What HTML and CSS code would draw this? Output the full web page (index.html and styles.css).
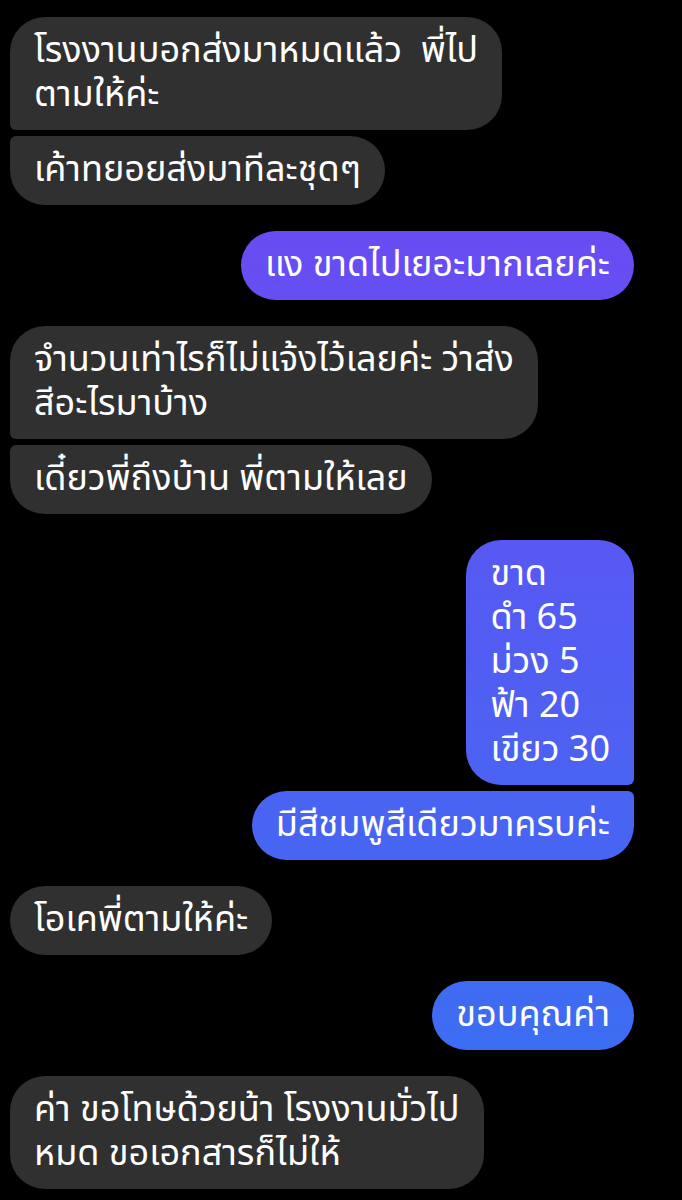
FILE: index.html
```html
<!DOCTYPE html>
<html lang="th">
<head>
  <meta charset="UTF-8">
  <meta name="viewport" content="width=device-width, initial-scale=1.0">
  <link rel="stylesheet" href="styles.css">
  <title>แชท</title>
</head>
<body>
  <div id="chat">
    <div class="group in">
      <div class="msg">โรงงานบอกส่งมาหมดแล้ว&nbsp; พี่ไป<br>ตามให้ค่ะ</div>
      <div class="msg">เค้าทยอยส่งมาทีละชุดๆ</div>
    </div>
    <div class="group out">
      <div class="msg">แง ขาดไปเยอะมากเลยค่ะ</div>
    </div>
    <div class="group in">
      <div class="msg">จำนวนเท่าไรก็ไม่แจ้งไว้เลยค่ะ ว่าส่ง<br>สีอะไรมาบ้าง</div>
      <div class="msg">เดี๋ยวพี่ถึงบ้าน พี่ตามให้เลย</div>
    </div>
    <div class="group out">
      <div class="msg">ขาด<br>ดำ 65<br>ม่วง 5<br>ฟ้า 20<br>เขียว 30</div>
      <div class="msg">มีสีชมพูสีเดียวมาครบค่ะ</div>
    </div>
    <div class="group in">
      <div class="msg">โอเคพี่ตามให้ค่ะ</div>
    </div>
    <div class="group out">
      <div class="msg">ขอบคุณค่า</div>
    </div>
    <div class="group in">
      <div class="msg">ค่า ขอโทษด้วยน้า โรงงานมั่วไป<br>หมด ขอเอกสารก็ไม่ให้</div>
    </div>
  </div>
</body>
</html>
```

FILE: styles.css
```css
*{box-sizing: border-box;}
body
{
  margin: 0;
  background-color: #000;
  font-family: "Noto Sans Thai", "Noto Sans", "DejaVu Sans", sans-serif;
  color: #fff;
}
#chat
{
  display: flex;
  flex-direction: column;
  gap: 26px;
  padding: 17px 48px 0 10px;
}
.group
{
  display: flex;
  flex-direction: column;
  gap: 6px;
}
.group.in  { align-items: flex-start; }
.group.out { align-items: flex-end; }
.msg
{
  padding: 12px 24px 13px;
  font-size: 36px;
  line-height: 44px;
  border-radius: 35px;
  white-space: nowrap;
}
.in .msg
{
  background-color: #303030;
}
.out .msg
{
  /* messenger style : couleur selon la hauteur dans l'ecran */
  background: linear-gradient(to bottom, #7543f2 0, #3473f2 1200px) fixed;
}
/* coins des bulles groupees */
.in .msg:not(:last-child)  { border-bottom-left-radius: 6px; }
.in .msg:not(:first-child) { border-top-left-radius: 6px; }
.out .msg:not(:last-child)  { border-bottom-right-radius: 6px; }
.out .msg:not(:first-child) { border-top-right-radius: 6px; }
```
